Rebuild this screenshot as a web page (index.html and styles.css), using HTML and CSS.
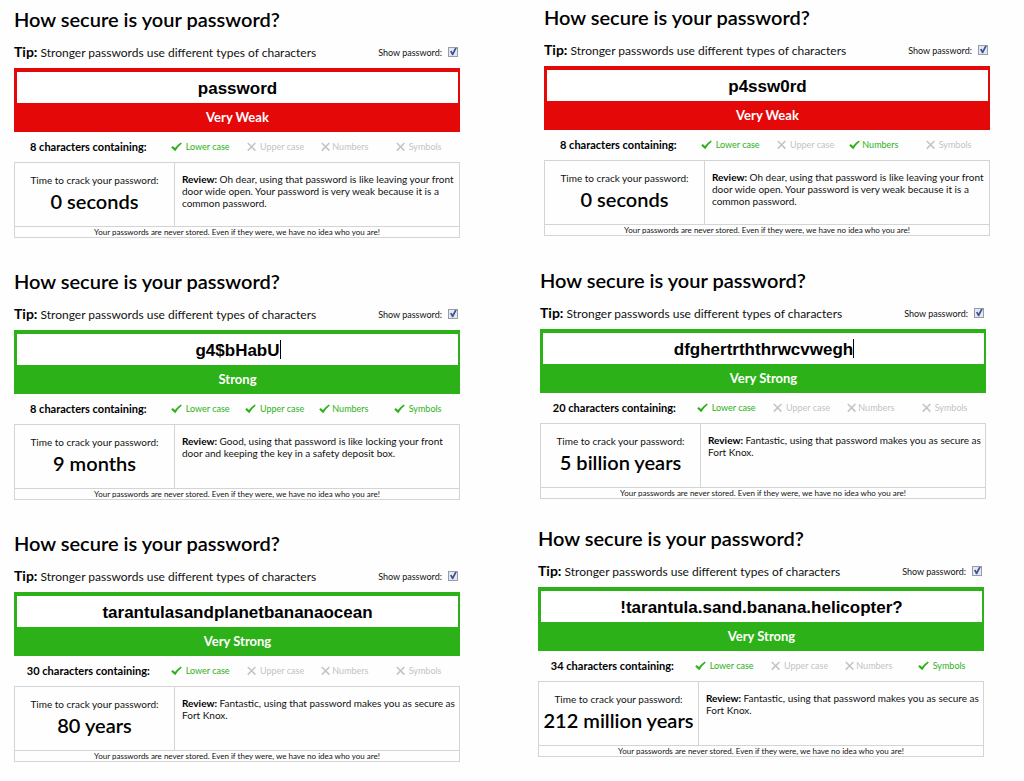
FILE: index.html
```
<!DOCTYPE html>
<html lang="en">
<head>
<meta charset="utf-8">
<title>How secure is your password?</title>
<link rel="stylesheet" href="styles.css">
</head>
<body>
<svg class="sprite" aria-hidden="true">
  <symbol id="yes" viewBox="0 0 11 10"><path d="M0.2 5.4 L1.8 4 L3.9 6.1 Q6.4 2.7 9.8 0.4 L10.8 1.5 Q7 4.6 4.2 9.2 Z" fill="currentColor"/></symbol>
  <symbol id="no" viewBox="0 0 11 10"><path d="M2.8 1 L10.4 8.6 M10.4 1 L2.8 8.6" fill="none" stroke="currentColor" stroke-width="1.5"/></symbol>
</svg>
<main class="board">
  <div class="column">
    <section class="panel weak">
      <h2 class="title">How secure is your password?</h2>
      <div class="tip-row"><p class="tip"><b>Tip:</b> Stronger passwords use different types of characters</p><label class="show">Show password: <input type="checkbox" checked></label></div>
      <div class="meter"><div class="field"><input type="text" class="entry" aria-label="Password" value="password"></div><p class="rating">Very Weak</p></div>
      <ul class="criteria">
        <li class="count">8 characters containing:</li>
        <li class="met"><svg><use href="#yes"/></svg>Lower case</li>
        <li><svg><use href="#no"/></svg>Upper case</li>
        <li class="snug"><svg><use href="#no"/></svg>Numbers</li>
        <li><svg><use href="#no"/></svg>Symbols</li>
      </ul>
      <div class="result"><div class="time"><p>Time to crack your password:</p><strong>0 seconds</strong></div><p class="review"><b>Review:</b> Oh dear, using that password is like leaving your front door wide open. Your password is very weak because it is a common password.</p></div>
      <p class="note">Your passwords are never stored. Even if they were, we have no idea who you are!</p>
    </section>
    <section class="panel strong">
      <h2 class="title">How secure is your password?</h2>
      <div class="tip-row"><p class="tip"><b>Tip:</b> Stronger passwords use different types of characters</p><label class="show">Show password: <input type="checkbox" checked></label></div>
      <div class="meter"><div class="field"><input type="text" class="entry" aria-label="Password" value="g4$bHabU"><span class="caret-layer" aria-hidden="true"><span class="caret">g4$bHabU</span></span></div><p class="rating">Strong</p></div>
      <ul class="criteria">
        <li class="count">8 characters containing:</li>
        <li class="met"><svg><use href="#yes"/></svg>Lower case</li>
        <li class="met"><svg><use href="#yes"/></svg>Upper case</li>
        <li class="met snug"><svg><use href="#yes"/></svg>Numbers</li>
        <li class="met"><svg><use href="#yes"/></svg>Symbols</li>
      </ul>
      <div class="result"><div class="time"><p>Time to crack your password:</p><strong>9 months</strong></div><p class="review"><b>Review:</b> Good, using that password is like locking your front door and keeping the key in a safety deposit box.</p></div>
      <p class="note">Your passwords are never stored. Even if they were, we have no idea who you are!</p>
    </section>
    <section class="panel strong">
      <h2 class="title">How secure is your password?</h2>
      <div class="tip-row"><p class="tip"><b>Tip:</b> Stronger passwords use different types of characters</p><label class="show">Show password: <input type="checkbox" checked></label></div>
      <div class="meter"><div class="field"><input type="text" class="entry" aria-label="Password" value="tarantulasandplanetbananaocean"></div><p class="rating">Very Strong</p></div>
      <ul class="criteria">
        <li class="count">30 characters containing:</li>
        <li class="met"><svg><use href="#yes"/></svg>Lower case</li>
        <li><svg><use href="#no"/></svg>Upper case</li>
        <li class="snug"><svg><use href="#no"/></svg>Numbers</li>
        <li><svg><use href="#no"/></svg>Symbols</li>
      </ul>
      <div class="result"><div class="time"><p>Time to crack your password:</p><strong>80 years</strong></div><p class="review"><b>Review:</b> Fantastic, using that password makes you as secure as Fort Knox.</p></div>
      <p class="note">Your passwords are never stored. Even if they were, we have no idea who you are!</p>
    </section>
  </div>
  <div class="column staggered">
    <section class="panel weak">
      <h2 class="title">How secure is your password?</h2>
      <div class="tip-row"><p class="tip"><b>Tip:</b> Stronger passwords use different types of characters</p><label class="show">Show password: <input type="checkbox" checked></label></div>
      <div class="meter"><div class="field"><input type="text" class="entry" aria-label="Password" value="p4ssw0rd"></div><p class="rating">Very Weak</p></div>
      <ul class="criteria">
        <li class="count">8 characters containing:</li>
        <li class="met"><svg><use href="#yes"/></svg>Lower case</li>
        <li><svg><use href="#no"/></svg>Upper case</li>
        <li class="met snug"><svg><use href="#yes"/></svg>Numbers</li>
        <li><svg><use href="#no"/></svg>Symbols</li>
      </ul>
      <div class="result"><div class="time"><p>Time to crack your password:</p><strong>0 seconds</strong></div><p class="review"><b>Review:</b> Oh dear, using that password is like leaving your front door wide open. Your password is very weak because it is a common password.</p></div>
      <p class="note">Your passwords are never stored. Even if they were, we have no idea who you are!</p>
    </section>
    <section class="panel strong">
      <h2 class="title">How secure is your password?</h2>
      <div class="tip-row"><p class="tip"><b>Tip:</b> Stronger passwords use different types of characters</p><label class="show">Show password: <input type="checkbox" checked></label></div>
      <div class="meter"><div class="field"><input type="text" class="entry" aria-label="Password" value="dfghertrththrwcvwegh"><span class="caret-layer" aria-hidden="true"><span class="caret">dfghertrththrwcvwegh</span></span></div><p class="rating">Very Strong</p></div>
      <ul class="criteria">
        <li class="count">20 characters containing:</li>
        <li class="met"><svg><use href="#yes"/></svg>Lower case</li>
        <li><svg><use href="#no"/></svg>Upper case</li>
        <li class="snug"><svg><use href="#no"/></svg>Numbers</li>
        <li><svg><use href="#no"/></svg>Symbols</li>
      </ul>
      <div class="result"><div class="time"><p>Time to crack your password:</p><strong>5 billion years</strong></div><p class="review"><b>Review:</b> Fantastic, using that password makes you as secure as Fort Knox.</p></div>
      <p class="note">Your passwords are never stored. Even if they were, we have no idea who you are!</p>
    </section>
    <section class="panel strong">
      <h2 class="title">How secure is your password?</h2>
      <div class="tip-row"><p class="tip"><b>Tip:</b> Stronger passwords use different types of characters</p><label class="show">Show password: <input type="checkbox" checked></label></div>
      <div class="meter"><div class="field"><input type="text" class="entry" aria-label="Password" value="!tarantula.sand.banana.helicopter?"></div><p class="rating">Very Strong</p></div>
      <ul class="criteria">
        <li class="count">34 characters containing:</li>
        <li class="met"><svg><use href="#yes"/></svg>Lower case</li>
        <li><svg><use href="#no"/></svg>Upper case</li>
        <li class="snug"><svg><use href="#no"/></svg>Numbers</li>
        <li class="met"><svg><use href="#yes"/></svg>Symbols</li>
      </ul>
      <div class="result"><div class="time"><p>Time to crack your password:</p><strong>212 million years</strong></div><p class="review"><b>Review:</b> Fantastic, using that password makes you as secure as Fort Knox.</p></div>
      <p class="note">Your passwords are never stored. Even if they were, we have no idea who you are!</p>
    </section>
  </div>
</main>
</body>
</html>
```
FILE: styles.css
```
* { box-sizing: border-box; }

body {
  margin: 0;
  background: #fefefe;
  color: #111;
  font-family: Lato, "Liberation Sans", sans-serif;
}

p, h2, ul { margin: 0; padding: 0; }

.sprite { display: none; }

.board {
  display: grid;
  grid-template-columns: 1fr 1fr;
  column-gap: 78px;
  padding: 7px 40px 10px 14px;
}

.column {
  display: flex;
  flex-direction: column;
  gap: 31px;
}

/* The right-hand column steps outward towards the top. */
.staggered { margin-top: -2px; gap: 27px; }
.staggered .panel:nth-child(1) { margin: 0 -6px 5px 6px; }
.staggered .panel:nth-child(2) { margin: 0 -2px 0 2px; }

.weak { --level: #e50808; }
.strong { --level: #2db118; }

.title {
  font-size: 20px;
  line-height: 24px;
  font-weight: 600;
  color: #000;
}

.tip-row {
  display: flex;
  justify-content: space-between;
  align-items: center;
  height: 37px;
  padding-top: 6px;
}

.tip { font-size: 12px; line-height: 20px; }
.tip b { font-size: 14px; color: #000; }

.show {
  display: flex;
  align-items: center;
  gap: 6px;
  padding-right: 2px;
  font-size: 9px;
  line-height: 12px;
}

.show input {
  appearance: none;
  position: relative;
  width: 10px;
  height: 10px;
  margin: 0 0 2px;
  border: 1px solid #999ca3;
  background: #e4e8f0;
}

.show input:checked::before {
  content: "";
  position: absolute;
  inset: 0;
  background: #3c539c;
  clip-path: polygon(12% 48%, 32% 40%, 44% 62%, 76% 4%, 98% 6%, 52% 98%, 38% 98%);
}

.meter {
  padding: 4px 2px 0 3px;
  background: var(--level);
}

.field { position: relative; }

.entry {
  display: block;
  width: 100%;
  height: 31px;
  padding: 2px 0 0;
  border: 0;
  background: #fff;
  color: #000;
  font: bold 17px/28px "Liberation Sans", Arial, sans-serif;
  text-align: center;
}

.caret-layer {
  position: absolute;
  inset: 5px 0 4px;
  text-align: center;
  font: bold 17px/22px "Liberation Sans", Arial, sans-serif;
  color: transparent;
  pointer-events: none;
}

.caret { box-shadow: 1px 0 0 #000; }

.rating {
  color: #fff;
  font-size: 13px;
  font-weight: 700;
  line-height: 29px;
  text-align: center;
}

.criteria {
  display: grid;
  grid-template-columns: 2fr 1fr 1fr 1fr 1fr;
  align-items: center;
  height: 30px;
  list-style: none;
  color: #c3c3c3;
  font-size: 9px;
  line-height: 12px;
}

.criteria li {
  display: flex;
  align-items: center;
  gap: 4px;
  padding-left: 8px;
  white-space: nowrap;
}

.criteria .count {
  justify-content: center;
  padding: 0;
  color: #000;
  font-size: 11px;
  font-weight: 700;
}

.criteria .snug { gap: 2px; }
.criteria .met { color: #2db118; }
.criteria svg { width: 11px; height: 10px; flex: none; }

.result {
  display: grid;
  grid-template-columns: 160px 1fr;
  min-height: 65px;
  border: 1px solid #d4d4d4;
}

.time {
  padding-top: 10px;
  border-right: 1px solid #d4d4d4;
  text-align: center;
  font-size: 10px;
  line-height: 14px;
}

.time strong {
  display: block;
  color: #000;
  font-size: 20px;
  font-weight: 600;
  line-height: 28px;
  white-space: nowrap;
}

.review {
  padding: 10px 2px 0 7px;
  font-size: 10px;
  line-height: 12px;
}

.review b { color: #000; }

.note {
  border: 1px solid #d4d4d4;
  border-top: 0;
  font-size: 8px;
  line-height: 10px;
  text-align: center;
}
```
